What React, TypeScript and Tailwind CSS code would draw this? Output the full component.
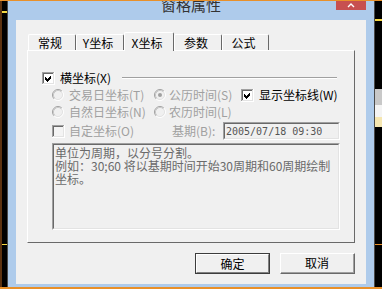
import React from 'react';

function CheckBox({ checked, disabled }: { checked?: boolean; disabled?: boolean }) {
  return (
    <svg width="13" height="13" viewBox="0 0 13 13" className="shrink-0" shapeRendering="crispEdges">
      <rect x="0" y="0" width="13" height="13" fill="#ffffff" />
      <rect x="0" y="0" width="12" height="12" fill="#a0a0a0" />
      <rect x="1" y="1" width="11" height="11" fill="#e3e3e3" />
      <rect x="1" y="1" width="10" height="10" fill="#696969" />
      <rect x="2" y="2" width="9" height="9" fill={disabled ? '#f4f4f4' : '#ffffff'} />
      {checked && <path d="M3 5 L5 7 L9 3 L9 6 L5 10 L3 8 Z" fill="#000000" />}
    </svg>
  );
}

function Radio({ checked }: { checked?: boolean }) {
  return (
    <svg width="12" height="12" viewBox="0 0 12 12" className="shrink-0">
      <circle cx="6" cy="6" r="5" fill="#f0f0f0" />
      <path d="M2.11 9.89 A5.5 5.5 0 0 1 9.89 2.11" stroke="#a0a0a0" strokeWidth="1" fill="none" />
      <path d="M9.89 2.11 A5.5 5.5 0 0 1 2.11 9.89" stroke="#ffffff" strokeWidth="1" fill="none" />
      <path d="M2.82 9.18 A4.5 4.5 0 0 1 9.18 2.82" stroke="#c8c8c8" strokeWidth="1" fill="none" />
      <path d="M9.18 2.82 A4.5 4.5 0 0 1 2.82 9.18" stroke="#e3e3e3" strokeWidth="1" fill="none" />
      {checked && <circle cx="6" cy="6" r="2" fill="#a0a0a0" />}
    </svg>
  );
}

function Tab({ label, width, selected }: { label: string; width: string; selected?: boolean }) {
  if (selected) {
    return (
      <div
        className={`${width} relative z-10 -mb-px h-[19px] flex items-start justify-center pt-[1px] pr-1 bg-[#f0f0f0] border-t border-l border-white border-r border-r-[#696969] rounded-t-[2px] text-[12px] text-black`}
      >
        {label}
      </div>
    );
  }
  return (
    <div
      className={`${width} h-[16px] flex items-center justify-center pr-1 bg-[#f0f0f0] border-t border-l border-white border-r border-r-[#696969] rounded-t-[2px] text-[12px] text-black`}
    >
      {label}
    </div>
  );
}

export default function App() {
  return (
    <div className="w-[382px] h-[289px] flex flex-col bg-black border-t border-b-2 border-[#e8902a] font-['Noto_Sans_CJK_SC',sans-serif] overflow-hidden">
      <div className="flex flex-1 min-h-0">
        {/* left edge of desktop */}
        <div className="w-[7px] shrink-0 bg-black border-l-2 border-[#5c3210] flex flex-col">
          <div className="mt-[10px] h-[2px] bg-[#f5d742]" />
          <div className="mt-[231px] h-[1px] bg-[#f5d742]" />
        </div>

        {/* window */}
        <div className="w-[368px] shrink-0 flex flex-col bg-[#aecbeb] border-l border-r border-[#4a4a4a]">
          {/* title bar */}
          <div className="relative h-[19px] shrink-0 flex justify-center">
            <span className="-mt-[6px] text-[15px] leading-[20px] text-[#333333]">窗格属性</span>
            <div className="absolute right-[8px] top-0 w-[30px] h-[9px] bg-[#c75050] flex justify-center">
              <svg width="10" height="9" viewBox="0 0 10 9">
                <path d="M2 6 L5 3 L8 6" stroke="#ffffff" strokeWidth="1.4" fill="none" />
              </svg>
            </div>
          </div>

          {/* client */}
          <div className="mx-[8px] h-[264px] bg-[#f0f0f0] flex flex-col pt-[12px] px-[11px]">
            {/* tabs */}
            <div className="h-[18px] flex items-end pl-[1px]">
              <Tab label="常规" width="w-[48px]" />
              <Tab label="Y坐标" width="w-[48px]" />
              <Tab label="X坐标" width="w-[50px]" selected />
              <Tab label="参数" width="w-[48px]" />
              <Tab label="公式" width="w-[47px]" />
            </div>

            {/* tab panel */}
            <div className="h-[193px] border-t border-l border-white border-r border-b border-r-[#696969] border-b-[#696969] flex flex-col text-[12px]">
              <div className="flex flex-col pt-[19px] pl-[14px] pr-[14px]">
                {/* group header */}
                <div className="h-[16px] flex items-center">
                  <CheckBox checked />
                  <span className="ml-[5px] text-black">横坐标(X)</span>
                  <div className="ml-[11px] mr-[3px] flex-1 flex flex-col">
                    <div className="h-px bg-[#a0a0a0]" />
                    <div className="h-px bg-white" />
                  </div>
                </div>

                <div className="pl-[10px] flex flex-col text-[#a0a0a0]">
                  <div className="mt-[1px] h-[16px] flex items-center">
                    <div className="w-[102px] flex items-center">
                      <Radio />
                      <span className="ml-[5px] whitespace-nowrap">交易日坐标(T)</span>
                    </div>
                    <div className="w-[87px] flex items-center">
                      <Radio checked />
                      <span className="ml-[3px] whitespace-nowrap">公历时间(S)</span>
                    </div>
                    <CheckBox checked />
                    <span className="ml-[5px] text-black whitespace-nowrap">显示坐标线(W)</span>
                  </div>

                  <div className="mt-[1px] h-[16px] flex items-center">
                    <div className="w-[102px] flex items-center">
                      <Radio />
                      <span className="ml-[5px] whitespace-nowrap">自然日坐标(N)</span>
                    </div>
                    <div className="flex items-center">
                      <Radio />
                      <span className="ml-[3px] whitespace-nowrap">农历时间(L)</span>
                    </div>
                  </div>

                  <div className="mt-[2px] h-[18px] flex items-center">
                    <div className="w-[120px] flex items-center">
                      <CheckBox disabled />
                      <span className="ml-[4px] whitespace-nowrap">自定坐标(O)</span>
                    </div>
                    <span className="w-[51px] whitespace-nowrap">基期(B):</span>
                    <div className="w-[117px] h-[18px] border-t border-l border-[#a0a0a0] border-r border-b border-r-white border-b-white">
                      <div className="h-full border-t border-l border-[#696969] border-r border-b border-r-[#e3e3e3] border-b-[#e3e3e3] bg-[#f0f0f0] flex items-center pl-[1px] font-['DejaVu_Sans_Mono',monospace] text-[10px] text-[#555555]">
                        2005/07/18 09:30
                      </div>
                    </div>
                  </div>

                  {/* description box */}
                  <div className="mt-[3px] w-[288px] h-[87px] border-t border-l border-[#a0a0a0] border-r border-b border-r-white border-b-white">
                    <div className="h-full border-t border-l border-[#696969] border-r border-b border-r-[#e3e3e3] border-b-[#e3e3e3] bg-[#f0f0f0] pl-[1px] pt-[1px] text-[12px] leading-[13px] text-[#6a6a6a] whitespace-nowrap">
                      单位为周期，以分号分割。
                      <br />
                      例如：30;60 将以基期时间开始30周期和60周期绘制
                      <br />
                      坐标。
                    </div>
                  </div>
                </div>
              </div>
            </div>

            {/* buttons */}
            <div className="mt-[10px] flex justify-end gap-[10px] text-[12px] text-black">
              <div className="w-[75px] h-[21px] border border-[#3c3c3c]">
                <div className="h-full border-t border-l border-white border-r border-b border-r-[#808080] border-b-[#808080] flex items-center justify-center">
                  确定
                </div>
              </div>
              <div className="w-[75px] h-[21px] border-t border-l border-white border-r border-b border-r-[#696969] border-b-[#696969]">
                <div className="h-full border-r border-b border-r-[#a0a0a0] border-b-[#a0a0a0] flex items-center justify-center">
                  取消
                </div>
              </div>
            </div>
          </div>
        </div>

        {/* right edge of desktop */}
        <div className="w-[7px] shrink-0 bg-black flex flex-col">
          <div className="mt-[18px] h-[2px] bg-[#f5d742]" />
          <div className="mt-[68px] h-[16px] bg-[#c8c8c8]" />
          <div className="h-[12px] bg-[#f4f4f4]" />
          <div className="h-[10px] bg-[#f5e6b0]" />
          <div className="mt-[117px] h-[1px] bg-[#e8902a]" />
        </div>
      </div>
    </div>
  );
}
